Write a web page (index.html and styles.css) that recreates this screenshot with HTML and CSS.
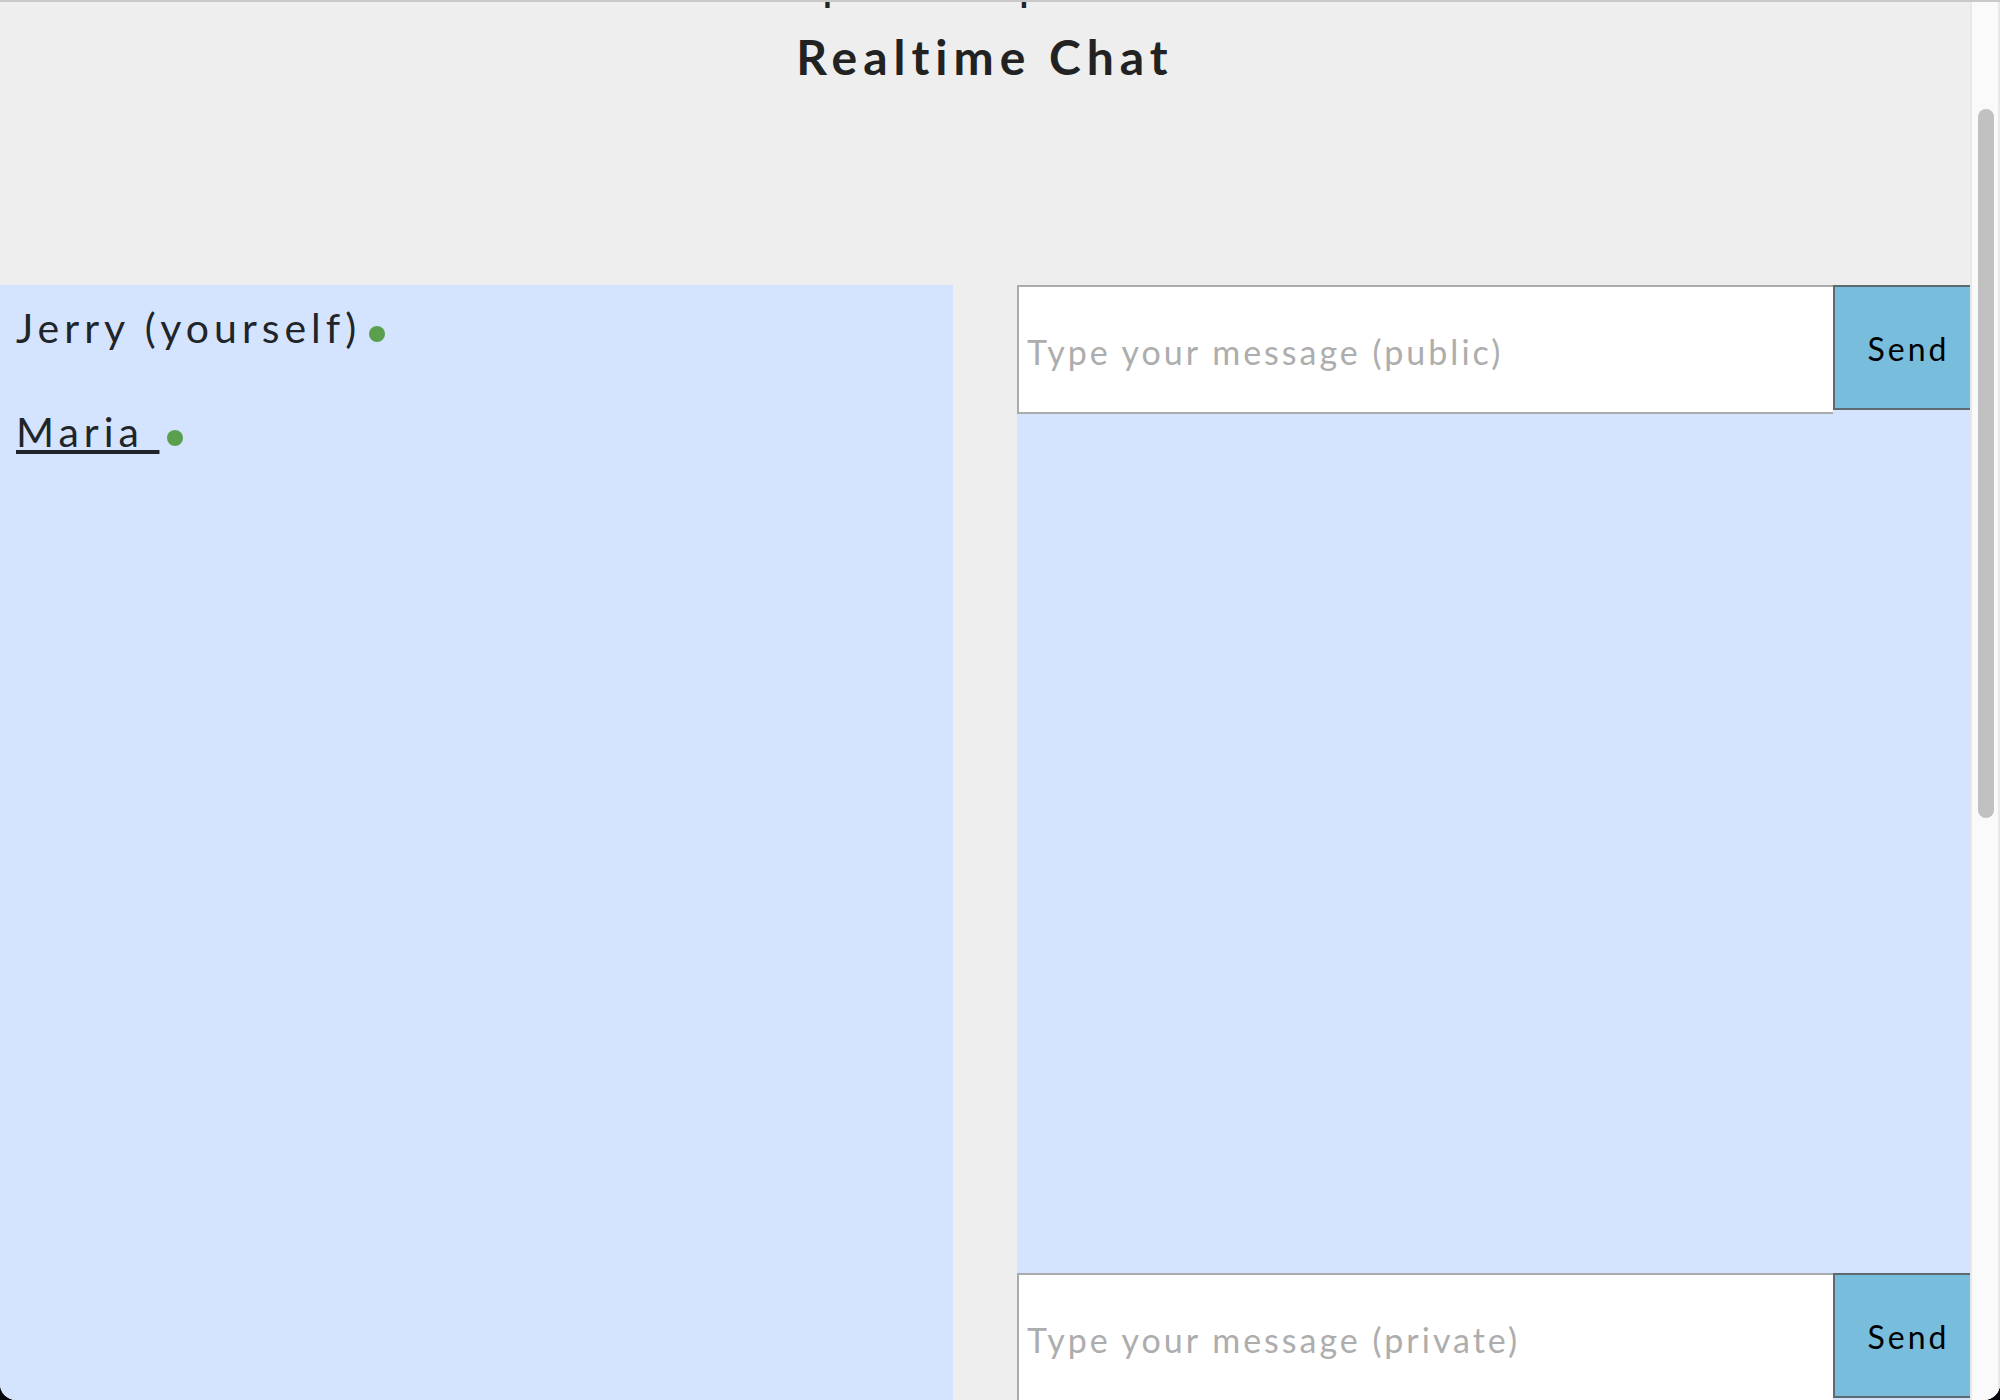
FILE: index.html
```html
<!DOCTYPE html>
<html lang="en">
<head>
  <meta charset="utf-8">
  <meta name="viewport" content="width=device-width, initial-scale=1">
  <title>Realtime Chat</title>
  <link rel="stylesheet" href="styles.css">
</head>
<body>
  <div class="window">
    <div class="page">
      <header class="header">
        <p class="tagline">public and private</p>
        <h1 class="title">Realtime Chat</h1>
      </header>
      <main class="chat">
        <ul class="users">
          <li class="user">Jerry (yourself)<span class="status"></span></li>
          <li class="user"><a class="user-link" href="#maria">Maria&nbsp;</a><span class="status"></span></li>
        </ul>
        <div class="rooms">
          <section class="room">
            <form class="composer">
              <input class="message" type="text" aria-label="Public message" placeholder="Type your message (public)">
              <button class="send" type="button">Send</button>
            </form>
          </section>
          <section class="room">
            <form class="composer">
              <input class="message" type="text" aria-label="Private message" placeholder="Type your message (private)">
              <button class="send" type="button">Send</button>
            </form>
          </section>
        </div>
      </main>
    </div>
    <div class="scrollbar"><div class="thumb"></div></div>
  </div>
</body>
</html>
```
FILE: styles.css
```css
* {
  box-sizing: border-box;
}

body {
  margin: 0;
  background: #05070c;
  color: #212529;
  font-family: Lato, "Open Sans", sans-serif;
  letter-spacing: 3px;
}

.window {
  display: flex;
  height: 100vh;
  overflow: hidden;
  border-top: 2px solid #c9c9c9;
  border-radius: 0 0 16px 16px;
  background: #eee;
}

.page {
  flex: 1;
  min-width: 0;
}

.header {
  display: flex;
  flex-direction: column;
  justify-content: flex-end;
  height: 283px;
  padding-bottom: 188px;
  overflow: hidden;
  color: #222;
  text-align: center;
}

.tagline {
  margin: 0;
  font-size: 34px;
  font-weight: 700;
  line-height: 56px;
}

.title {
  margin: 0;
  font-size: 48px;
  font-weight: 700;
  line-height: 80px;
  letter-spacing: 6px;
}

.chat {
  display: grid;
  grid-template-columns: 1fr 1fr;
  gap: 64px;
}

.users {
  margin: 0;
  padding: 14px 16px;
  background: #d4e4fe;
  list-style: none;
}

.user {
  display: flex;
  align-items: center;
  gap: 8px;
  height: 56px;
  margin-bottom: 48px;
  font-size: 41px;
  letter-spacing: 5px;
}

.user-link {
  color: inherit;
  text-decoration-thickness: 4px;
  text-underline-offset: 3px;
}

.status {
  width: 16px;
  height: 16px;
  margin-top: 14px;
  border-radius: 50%;
  background: #5a9f4d;
}

.room {
  height: 988px;
  background: #d4e4fe;
}

.composer {
  display: flex;
  align-items: flex-start;
}

.message {
  flex: 1;
  min-width: 0;
  height: 129px;
  padding: 4px 8px 0;
  border: 2px solid #a9abad;
  border-right: 0;
  border-radius: 0;
  background: #fff;
  font: inherit;
  font-size: 34px;
  letter-spacing: inherit;
}

.message::placeholder {
  color: #adadad;
}

.send {
  width: 137px;
  height: 125px;
  padding: 2px 0 0 12px;
  border: 2px solid #5d6b71;
  border-right: 0;
  border-radius: 0;
  background: #78bddb;
  color: #000;
  font: inherit;
  font-size: 32px;
  letter-spacing: inherit;
}

.scrollbar {
  width: 30px;
  padding: 107px 4px 0 6px;
  border: solid #e8e8e8;
  border-width: 0 2px;
  background: #fafafa;
}

.thumb {
  height: 709px;
  border-radius: 8px;
  background: #c1c1c1;
}
```
